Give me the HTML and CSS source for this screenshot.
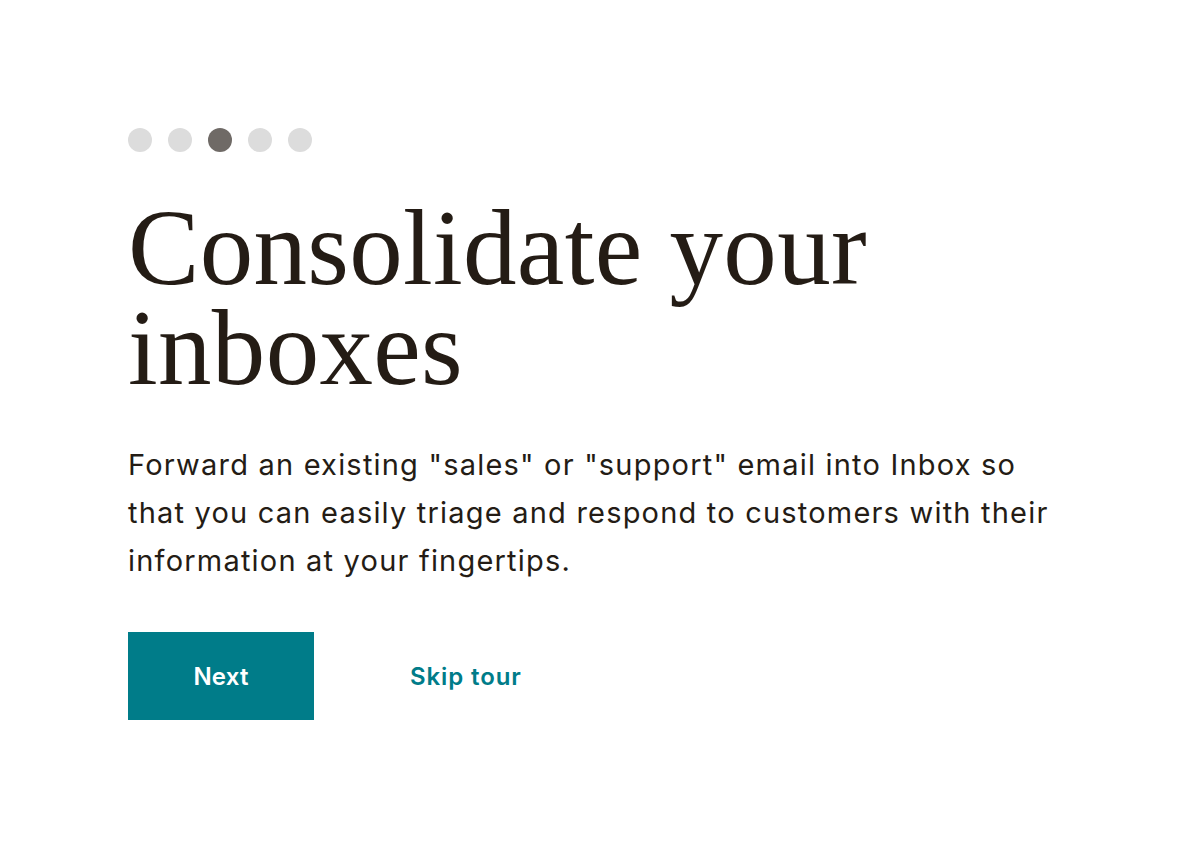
FILE: index.html
```html
<!DOCTYPE html>
<html lang="en">
<head>
<meta charset="utf-8">
<title>Consolidate your inboxes</title>
<link rel="stylesheet" href="styles.css">
</head>
<body>
<main class="tour">
  <div class="dots">
    <span class="dot"></span>
    <span class="dot"></span>
    <span class="dot active"></span>
    <span class="dot"></span>
    <span class="dot"></span>
  </div>
  <h1 class="title">Consolidate your<br>inboxes</h1>
  <p class="lead">Forward an existing "sales" or "support" email into Inbox so that you can easily triage and respond to customers with their information at your fingertips.</p>
  <div class="actions">
    <button class="btn-primary">Next</button>
    <a class="btn-link" href="#">Skip tour</a>
  </div>
</main>
</body>
</html>
```
FILE: styles.css
```css
html, body {
  margin: 0;
  padding: 0;
  background: #ffffff;
}
body {
  width: 1182px;
  height: 848px;
  overflow: hidden;
}
.tour {
  padding: 128px 0 0 128px;
  color: #241c15;
}
.dots {
  display: flex;
  gap: 16px;
  height: 24px;
}
.dot {
  width: 24px;
  height: 24px;
  border-radius: 50%;
  background: #dcdcdc;
}
.dot.active {
  background: #6f6a66;
}
.title {
  margin: 46px 0 0 0;
  font-family: "Liberation Serif", "Times New Roman", serif;
  font-weight: 400;
  font-size: 107px;
  line-height: 100px;
  letter-spacing: 0.3px;
  color: #241c15;
}
.lead {
  margin: 43px 0 0 0;
  width: 935px;
  font-family: Inter, "Noto Sans", sans-serif;
  font-size: 29px;
  line-height: 48px;
  letter-spacing: 1.2px;
  color: #241c15;
}
.actions {
  margin-top: 47px;
  display: flex;
  align-items: center;
  gap: 96px;
}
.btn-primary {
  width: 186px;
  height: 88px;
  border: 0;
  background: #007c89;
  color: #ffffff;
  font-family: Inter, "Noto Sans", sans-serif;
  font-size: 24px;
  font-weight: 600;
  letter-spacing: 0.2px;
  cursor: pointer;
}
.btn-link {
  font-family: Inter, "Noto Sans", sans-serif;
  font-size: 24px;
  font-weight: 600;
  letter-spacing: 0.9px;
  color: #007c89;
  text-decoration: none;
}
```
